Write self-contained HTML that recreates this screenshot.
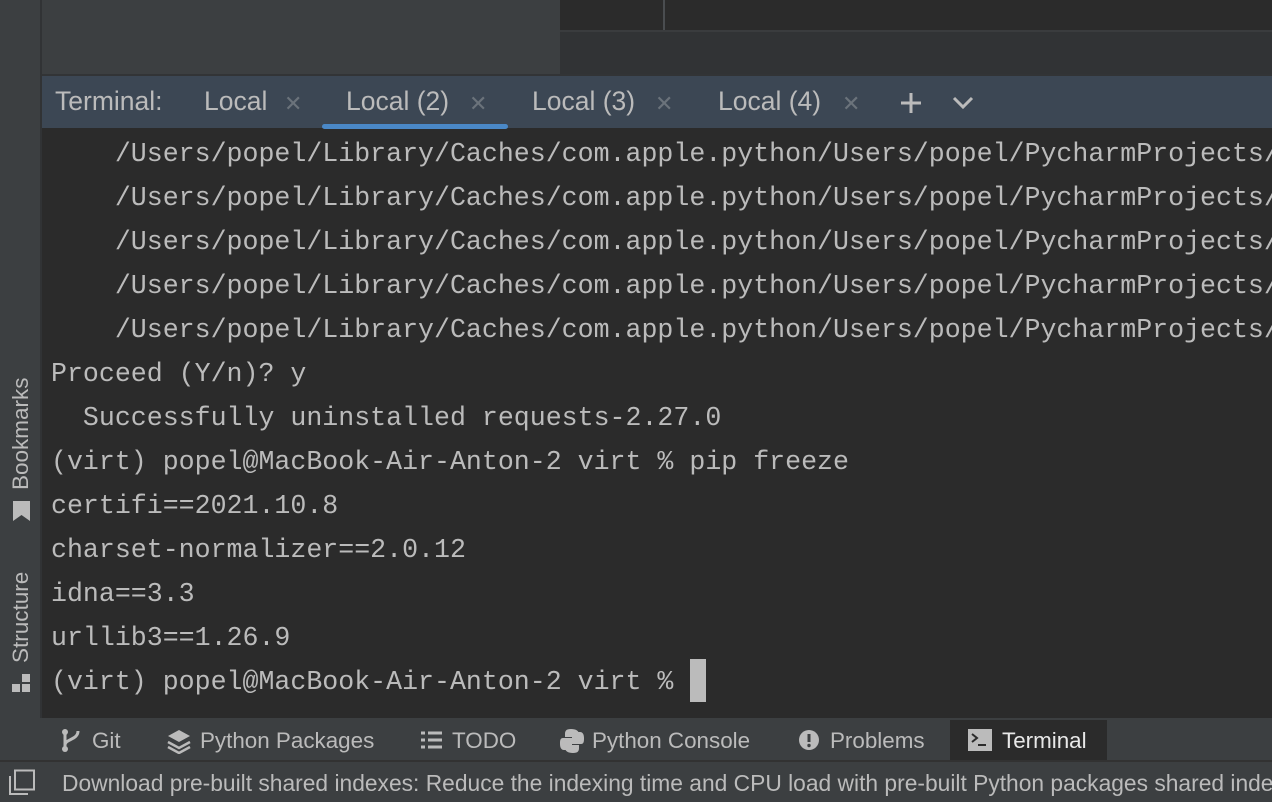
<!DOCTYPE html>
<html><head><meta charset="utf-8"><style>
*{margin:0;padding:0;box-sizing:border-box}
body{width:1272px;height:802px;overflow:hidden;background:#2b2b2b;position:relative;font-family:"Liberation Sans",sans-serif;color:#bbbbbb}
.a{position:absolute}
.term{font-family:"Liberation Mono",monospace;font-size:26.6px;line-height:44px;color:#bbbbbb;white-space:pre}
.ui{font-size:23px;white-space:nowrap}
.tab{font-size:26.5px;top:86px}
.x{color:#6b737b;font-size:22px;position:absolute;top:5px}
</style></head><body>
<div class="a" style="left:0;top:0;width:40px;height:718px;background:#3c3f41"></div>
<div class="a" style="left:40px;top:0;width:2px;height:718px;background:#313335"></div>
<div class="a" style="left:42px;top:0;width:518px;height:74px;background:#3c3f41"></div>
<div class="a" style="left:560px;top:0;width:712px;height:30px;background:#2b2b2b"></div>
<div class="a" style="left:663px;top:0;width:2px;height:30px;background:#4a4d50"></div>
<div class="a" style="left:560px;top:30px;width:712px;height:2px;background:#3a3c3e"></div>
<div class="a" style="left:560px;top:32px;width:712px;height:42px;background:#313335"></div>
<div class="a" style="left:42px;top:74px;width:1230px;height:2px;background:#323436"></div>
<div class="a" style="left:42px;top:76px;width:1230px;height:52px;background:#3c4754"></div>
<div class="a ui tab" style="left:55px">Terminal:</div>
<div class="a ui tab" style="left:204px">Local<span class="x" style="left:80px">✕</span></div>
<div class="a ui tab" style="left:346px">Local (2)<span class="x" style="left:123px">✕</span></div>
<div class="a" style="left:322px;top:124px;width:186px;height:5px;border-radius:3px;background:#4a88c7"></div>
<div class="a ui tab" style="left:532px">Local (3)<span class="x" style="left:123px">✕</span></div>
<div class="a ui tab" style="left:718px">Local (4)<span class="x" style="left:124px">✕</span></div>
<svg class="a" style="left:898px;top:90px" width="80" height="26"><path d="M13 3v20M3 13h20" stroke="#bbb" stroke-width="3"/><path d="M56 8l9 9 9-9" stroke="#bbb" stroke-width="3" fill="none"/></svg>
<div class="a term" style="left:51px;top:132px">    /Users/popel/Library/Caches/com.apple.python/Users/popel/PycharmProjects/
    /Users/popel/Library/Caches/com.apple.python/Users/popel/PycharmProjects/
    /Users/popel/Library/Caches/com.apple.python/Users/popel/PycharmProjects/
    /Users/popel/Library/Caches/com.apple.python/Users/popel/PycharmProjects/
    /Users/popel/Library/Caches/com.apple.python/Users/popel/PycharmProjects/
Proceed (Y/n)? y
  Successfully uninstalled requests-2.27.0
(virt) popel@MacBook-Air-Anton-2 virt % pip freeze
certifi==2021.10.8
charset-normalizer==2.0.12
idna==3.3
urllib3==1.26.9
(virt) popel@MacBook-Air-Anton-2 virt % </div>
<div class="a" style="left:690px;top:659px;width:16px;height:43px;background:#bbbbbb"></div>
<div class="a ui" style="left:8px;top:490px;transform:rotate(-90deg);transform-origin:left top;font-size:22.5px">Bookmarks</div>
<svg class="a" style="left:12px;top:500px" width="20" height="22"><path d="M1 1h17v20l-8.5-6-8.5 6z" fill="#bbb"/></svg>
<div class="a ui" style="left:8px;top:663px;transform:rotate(-90deg);transform-origin:left top;font-size:22.5px">Structure</div>
<svg class="a" style="left:12px;top:674px" width="20" height="20"><rect x="10" y="0" width="8" height="8" fill="#bbb"/><rect x="0" y="10" width="8" height="8" fill="#bbb"/><rect x="10" y="10" width="8" height="8" fill="#bbb"/></svg>
<div class="a" style="left:0;top:718px;width:1272px;height:42px;background:#3c3f41"></div>
<div class="a" style="left:950px;top:720px;width:157px;height:40px;background:#2b2b2b"></div>
<svg class="a" style="left:60px;top:728px" width="24" height="26"><circle cx="5" cy="4" r="3" fill="#bbb"/><circle cx="5" cy="21" r="3" fill="#bbb"/><path d="M5 4v17M18 3c0 9-13 8-13 14" stroke="#bbb" stroke-width="3" fill="none"/></svg>
<div class="a ui" style="left:92px;top:728px;font-size:22.4px">Git</div>
<svg class="a" style="left:166px;top:728px" width="26" height="26"><path d="M13 2l11 6-11 6-11-6z" fill="#bbb"/><path d="M2 14l11 6 11-6M2 19l11 6 11-6" stroke="#bbb" stroke-width="2.5" fill="none"/></svg>
<div class="a ui" style="left:200px;top:728px;font-size:22.4px">Python Packages</div>
<svg class="a" style="left:421px;top:730px" width="22" height="20"><path d="M0 3h4M7 3h14M0 10h4M7 10h14M0 17h4M7 17h14" stroke="#bbb" stroke-width="3"/></svg>
<div class="a ui" style="left:452px;top:728px;font-size:22.4px">TODO</div>
<svg class="a" style="left:560px;top:728px" width="24" height="26"><path d="M11 1c-5 0-6 2-6 5v3h7v1H3c-3 0-3 3-3 6s1 6 4 6h2v-4c0-2 2-4 4-4h6c2 0 3-1 3-3V6c0-3-3-5-8-5z" fill="#bbb"/><path d="M13 25c5 0 6-2 6-5v-3h-7v-1h9c3 0 3-3 3-6s-1-6-4-6h-2v4c0 2-2 4-4 4H8c-2 0-3 1-3 3v5c0 3 3 5 8 5z" fill="#bbb"/></svg>
<div class="a ui" style="left:592px;top:728px;font-size:22.4px">Python Console</div>
<svg class="a" style="left:798px;top:729px" width="22" height="22"><circle cx="11" cy="11" r="10" fill="#bbb"/><path d="M11 5v8" stroke="#3c3f41" stroke-width="3"/><circle cx="11" cy="16.5" r="1.7" fill="#3c3f41"/></svg>
<div class="a ui" style="left:830px;top:728px;font-size:22.4px">Problems</div>
<svg class="a" style="left:968px;top:729px" width="24" height="22"><rect width="24" height="22" fill="#bbb"/><path d="M4 5l5 4-5 4M10 16h8" stroke="#2b2b2b" stroke-width="2" fill="none"/></svg>
<div class="a ui" style="left:1002px;top:728px;font-size:22.4px;color:#e8e8e8">Terminal</div>
<div class="a" style="left:0;top:760px;width:1272px;height:2px;background:#323232"></div>
<div class="a" style="left:0;top:762px;width:1272px;height:40px;background:#3c3f41"></div>
<svg class="a" style="left:9px;top:769px" width="28" height="26"><path d="M1 7v18h18" stroke="#bbb" stroke-width="2" fill="none"/><rect x="6" y="1.5" width="19" height="19" stroke="#bbb" stroke-width="2" fill="none"/></svg>
<div class="a ui" style="left:62px;top:770px;font-size:22.8px">Download pre-built shared indexes: Reduce the indexing time and CPU load with pre-built Python packages shared indexes</div>
</body></html>
